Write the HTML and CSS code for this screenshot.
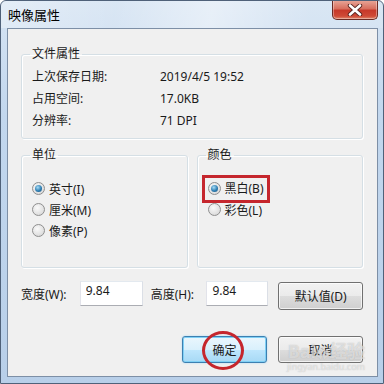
FILE: index.html
```html
<!DOCTYPE html>
<html lang="zh-CN">
<head>
  <meta charset="UTF-8" />
  <title>映像属性</title>
  <link rel="stylesheet" href="styles.css">
</head>
<body>
  <div class="window">
    <!-- 标题栏 -->
    <div class="titlebar">
      <span class="title">映像属性</span>
      <button class="close">
        <svg width="16" height="12" viewBox="0 0 16 12">
          <path d="M3 1.5 L13 10.5 M13 1.5 L3 10.5" stroke="#5a2620" stroke-width="4.4" stroke-linecap="round"/>
          <path d="M3 1.5 L13 10.5 M13 1.5 L3 10.5" stroke="#fff" stroke-width="2.6" stroke-linecap="round"/>
        </svg>
      </button>
    </div>

    <div class="client">
      <!-- 文件属性 -->
      <fieldset class="group file-info">
        <legend>文件属性</legend>
        <div class="info-row"><span class="key">上次保存日期:</span><span>2019/4/5 19:52</span></div>
        <div class="info-row"><span class="key">占用空间:</span><span>17.0KB</span></div>
        <div class="info-row"><span class="key">分辨率:</span><span>71 DPI</span></div>
      </fieldset>

      <div class="groups">
        <fieldset class="group choice">
          <legend>单位</legend>
          <div class="radio-row"><span class="radio on"></span>英寸(I)</div>
          <div class="radio-row"><span class="radio"></span>厘米(M)</div>
          <div class="radio-row"><span class="radio"></span>像素(P)</div>
        </fieldset>
        <fieldset class="group choice">
          <legend>颜色</legend>
          <div class="radio-row"><span class="mark"><span class="radio on"></span>黑白(B)</span></div>
          <div class="radio-row"><span class="radio"></span>彩色(L)</div>
        </fieldset>
      </div>

      <!-- 尺寸 -->
      <div class="size-row">
        <label class="size-label">宽度(W):</label>
        <input class="field" type="text" value="9.84">
        <label class="size-label second">高度(H):</label>
        <input class="field narrow" type="text" value="9.84">
        <button class="btn default-btn">默认值(D)</button>
      </div>

      <div class="actions">
        <button class="btn ok">确定<span class="ring"></span></button>
        <button class="btn">取消</button>
      </div>

      <div class="watermark">
        <span class="wm-big">Bai</span><span class="wm-paw">&#10047;</span><span class="wm-big">经验</span>
        <div class="wm-small">jingyan.baidu.com</div>
      </div>
    </div>
  </div>
</body>
</html>
```

FILE: styles.css
```css
body {
  margin: 0;
  font-family: "Noto Sans", "Noto Sans CJK SC", sans-serif;
  font-size: 12px;
  color: #1a1a1a;
  background: #fff;
}
.window {
  width: 384px;
  height: 384px;
  box-sizing: border-box;
  border: 1px solid #4f6179;
  border-radius: 6px 6px 0 0;
  background: linear-gradient(to bottom, #d6e4f3 0%, #c2d7ee 30%, #b8cfe9 100%);
  display: flex;
  flex-direction: column;
  position: relative;
  overflow: hidden;
}
.titlebar {
  height: 27px;
  display: flex;
  justify-content: space-between;
  align-items: flex-start;
  background: linear-gradient(100deg, rgba(255,255,255,0.35) 0%, rgba(255,255,255,0.1) 30%, rgba(255,255,255,0.45) 55%, rgba(255,255,255,0.1) 80%);
}
.title {
  font-size: 13px;
  color: #000;
  margin: 6px 0 0 7px;
  line-height: 16px;
}
.close {
  width: 46px;
  height: 20px;
  margin: -1px 5px 0 0;
  padding: 0;
  border: 1px solid #6b2b24;
  border-top: none;
  border-radius: 0 0 5px 5px;
  background: linear-gradient(to bottom, #e9a99b 0%, #d8705f 45%, #c7392a 55%, #cf4a36 85%, #e08a6e 100%);
  box-shadow: inset 0 0 0 1px rgba(255,255,255,0.35);
  display: flex;
  align-items: center;
  justify-content: center;
}

/* 客户区 */
.client {
  flex: 1;
  margin: 0 5px 6px 6px;
  border: 1px solid #7d8fa6;
  background: #f0f0f0;
  padding: 0 14px 0 13px;
  position: relative;
}
.group {
  margin: 17px 0 0;
  padding: 0 0 0 10px;
  border: 1px solid #d5dfe5;
  border-radius: 3px;
  box-shadow: inset 1px 1px 0 #fff, 1px 1px 0 #fff;
}
.group legend {
  padding: 0 2px;
  margin-left: -2px;
  line-height: 16px;
  color: #1a1a1a;
}
.file-info {
  padding-top: 3px;
  padding-bottom: 7px;
}
.info-row {
  display: flex;
  height: 22px;
  align-items: center;
}
.key {
  width: 128px;
}

.groups {
  display: flex;
  gap: 9px;
}
.groups .group {
  flex: 1;
  margin-top: 8px;
  padding-top: 15px;
  padding-bottom: 20px;
  min-width: 0;
}
.choice {
  min-height: 84px;
}
.radio-row {
  height: 21px;
  display: flex;
  align-items: center;
}
.radio {
  width: 11px;
  height: 11px;
  border: 1px solid #8f8f8f;
  border-radius: 50%;
  background: radial-gradient(circle at 40% 35%, #fafafa 0%, #e2e2e2 60%, #cfcfcf 100%);
  margin-right: 4px;
  flex: none;
  position: relative;
}
.radio.on::after {
  content: "";
  position: absolute;
  left: 2px;
  top: 2px;
  width: 7px;
  height: 7px;
  border-radius: 50%;
  background: radial-gradient(circle at 40% 35%, #a7dcf6 0%, #2f7fb3 55%, #1a4f7a 100%);
}
.mark {
  display: inline-flex;
  align-items: center;
  outline: 3px solid #c5262d;
  outline-offset: 3px;
  padding-right: 0;
  line-height: 16px;
}

/* 尺寸行 */
.size-row {
  display: flex;
  align-items: flex-start;
  margin-top: 13px;
}
.size-label {
  width: 59px;
  line-height: 25px;
  margin-top: 1px;
}
.size-label.second {
  width: 56px;
  margin-left: 8px;
}
.field {
  width: 63px;
  height: 25px;
  box-sizing: border-box;
  border: 1px solid #abadb3;
  border-top-color: #e3e9ef;
  border-left-color: #e2e3ea;
  border-right-color: #dbdfe6;
  background: #fff;
  font: inherit;
  padding: 0 5px 6px;
  color: #1a1a1a;
}
.field.narrow {
  width: 62px;
}
.btn {
  width: 85px;
  height: 28px;
  box-sizing: border-box;
  border: 1px solid #707070;
  border-radius: 3px;
  background: linear-gradient(to bottom, #f2f2f2 0%, #ebebeb 50%, #dddddd 51%, #cfcfcf 100%);
  box-shadow: inset 0 0 0 1px rgba(255,255,255,0.7);
  font: inherit;
  color: #1a1a1a;
  padding: 0;
}
.default-btn {
  margin-left: 10px;
  margin-top: 1px;
}
.actions {
  display: flex;
  justify-content: flex-end;
  gap: 11px;
  margin-top: 26px;
}
.actions .btn {
  height: 27px;
}
.btn.ok {
  position: relative;
  border-color: #3c7fb1;
  background: linear-gradient(to bottom, #eaf6fd 0%, #d9f0fc 50%, #bee6fd 51%, #a7d9f5 100%);
  box-shadow: inset 0 0 0 1px #7fd0f5, 0 0 2px #9fd7f5;
}
.ring {
  position: absolute;
  left: 19px;
  top: -6px;
  width: 36px;
  height: 33px;
  border: 3px solid #c5262d;
  border-radius: 50%;
}

/* 水印 */
.watermark {
  position: absolute;
  right: 12px;
  bottom: 3px;
  color: rgba(255,255,255,0.55);
  text-shadow: 0 0 1px rgba(120,120,120,0.5);
  text-align: right;
  pointer-events: none;
}
.wm-big {
  font-size: 18px;
  font-weight: bold;
}
.wm-paw {
  font-size: 13px;
}
.wm-small {
  font-size: 9px;
  margin-top: -3px;
}
```
